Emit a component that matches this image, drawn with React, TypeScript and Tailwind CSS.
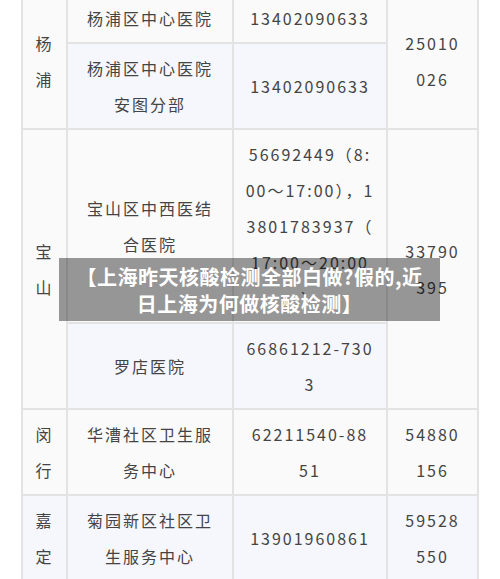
import React from "react";

const td =
  "border-2 border-[#e3e3e3] py-[6px] px-0 text-center align-middle whitespace-nowrap";

export default function App() {
  return (
    <div
      className="relative w-[500px] h-[579px] overflow-hidden bg-white text-[#444] text-[16px] leading-[36px] tracking-[2px]"
      style={{ fontFamily: '"Noto Sans CJK SC", "Noto Sans", sans-serif' }}
    >
      <table className="ml-[21px] mt-[-8px] w-[458px] table-fixed border-collapse">
        <colgroup>
          <col className="w-[45px]" />
          <col className="w-[166px]" />
          <col className="w-[154px]" />
          <col className="w-[91px]" />
        </colgroup>
        <tbody>
          <tr className="bg-[#fafafa]">
            <td rowSpan={2} className={td}>
              杨<br />浦
            </td>
            <td className={td}>杨浦区中心医院</td>
            <td className={td}>13402090633</td>
            <td rowSpan={2} className={td + " bg-[#fafafa]"}>
              25010<br />026
            </td>
          </tr>
          <tr className="bg-[#f5f7fd]">
            <td className={td}>
              杨浦区中心医院<br />安图分部
            </td>
            <td className={td}>13402090633</td>
          </tr>
          <tr className="bg-[#fafafa]">
            <td rowSpan={2} className={td}>
              宝<br />山
            </td>
            <td className={td}>
              宝山区中西医结<br />合医院
            </td>
            <td className={td}>
              56692449（8:<br />00～17:00），1<br />3801783937（<br />17:00～20:00<br />）
            </td>
            <td rowSpan={2} className={td + " bg-[#fafafa]"}>
              33790<br />395
            </td>
          </tr>
          <tr className="bg-[#f5f7fd]">
            <td className={td}>罗店医院</td>
            <td className={td}>
              66861212-730<br />3
            </td>
          </tr>
          <tr className="bg-[#fafafa]">
            <td className={td}>
              闵<br />行
            </td>
            <td className={td}>
              华漕社区卫生服<br />务中心
            </td>
            <td className={td}>
              62211540-88<br />51
            </td>
            <td className={td}>
              54880<br />156
            </td>
          </tr>
          <tr className="bg-[#f5f7fd]">
            <td className={td}>
              嘉<br />定
            </td>
            <td className={td}>
              菊园新区社区卫<br />生服务中心
            </td>
            <td className={td}>13901960861</td>
            <td className={td}>
              59528<br />550
            </td>
          </tr>
        </tbody>
      </table>

      <div className="absolute left-[59px] top-[258px] w-[381px] h-[63px] bg-black/40 flex flex-col items-center justify-center text-white font-bold text-[20px] leading-[27px] tracking-[0.5px]">
        <div>【上海昨天核酸检测全部白做?假的,近</div>
        <div>日上海为何做核酸检测】</div>
      </div>
    </div>
  );
}
